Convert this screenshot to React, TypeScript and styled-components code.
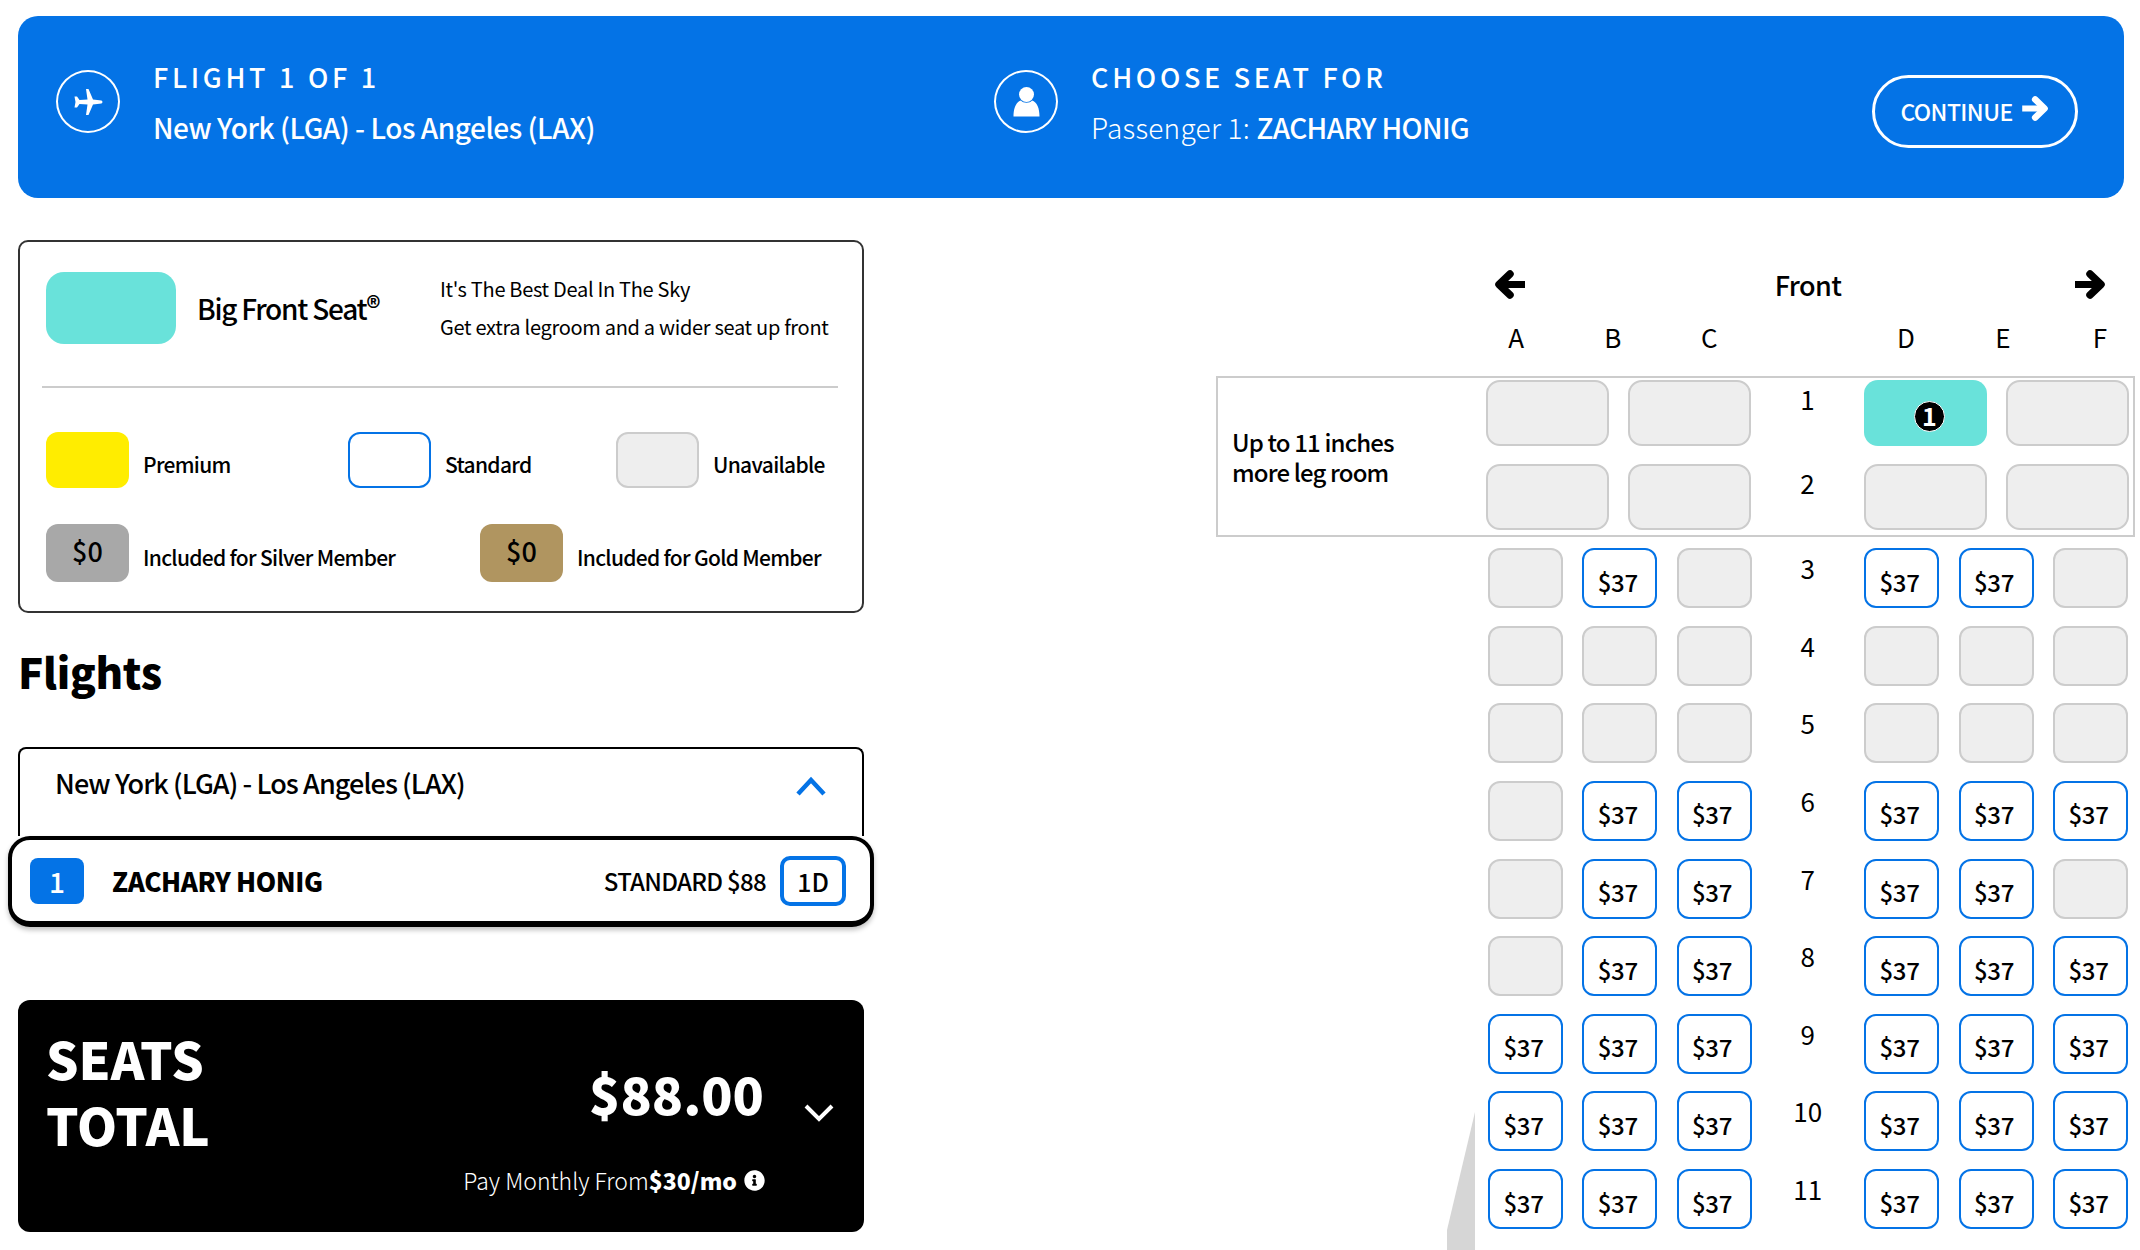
import React from "react";
import styled, { createGlobalStyle } from "styled-components";
import { FaInfoCircle } from "react-icons/fa";

const blue = "#0473e6";
const teal = "#69e2da";
const FONT = `"Noto Sans CJK SC", "Noto Sans", sans-serif`;

const Global = createGlobalStyle`
  html, body { margin: 0; padding: 0; background: #fff; }
  body { height: 1250px; overflow: hidden; font-family: ${FONT}; color: #000; }
  * { box-sizing: border-box; }
`;

const Page = styled.div`
  width: 2140px;
  height: 1250px;
  padding: 16px 5px 0 18px;
`;

const Banner = styled.header`
  width: 2106px;
  height: 182px;
  background: ${blue};
  border-radius: 20px;
  color: #fff;
  display: flex;
  align-items: center;
  padding: 0 46px 0 38px;
`;

const BannerBlock = styled.div<{ $width: number }>`
  width: ${(p) => p.$width}px;
  height: 90px;
  display: flex;
  align-items: flex-start;
  gap: 33px;
`;

const IconRing = styled.div`
  width: 64px;
  height: 63px;
  margin-top: 8px;
  border: 2px solid #fff;
  border-radius: 50%;
  display: flex;
  align-items: center;
  justify-content: center;
  flex: none;
  svg { display: block; }
`;

const BannerText = styled.div`
  display: flex;
  flex-direction: column;
  margin-top: -5px;
`;

const Eyebrow = styled.div`
  font-size: 27px;
  line-height: 40px;
  font-weight: 500;
  letter-spacing: 3.7px;
`;

const BannerLine = styled.div<{ $light?: boolean }>`
  font-size: 28px;
  line-height: 42px;
  margin-top: 9px;
  font-weight: ${(p) => (p.$light ? 300 : 500)};
  letter-spacing: ${(p) => (p.$light ? "0.25px" : "-0.45px")};
  b { font-weight: 500; letter-spacing: -0.65px; }
`;

const ContinueButton = styled.button`
  margin: 8px 0 0 auto;
  width: 206px;
  height: 73px;
  background: transparent;
  border: 3px solid #fff;
  border-radius: 37px;
  color: #fff;
  font-family: ${FONT};
  font-size: 23px;
  font-weight: 500;
  letter-spacing: -0.6px;
  display: flex;
  align-items: center;
  justify-content: center;
  gap: 9px;
  padding: 0;
  svg { margin-top: -6px; }
`;

const ArrowIcon = styled.svg<{ $flip?: boolean }>`
  display: block;
  flex: none;
  transform: ${(p) => (p.$flip ? "scaleX(-1)" : "none")};
`;

const Main = styled.main`
  display: flex;
  justify-content: space-between;
  align-items: flex-start;
`;

const LeftColumn = styled.section`
  width: 846px;
  padding-top: 42px;
`;

const Legend = styled.div`
  height: 373px;
  border: 2px solid #333;
  border-radius: 10px;
  padding: 30px 22px 0 26px;
`;

const FeatureRow = styled.div`
  display: flex;
  align-items: center;
  height: 72px;
`;

const FeatureSwatch = styled.div`
  width: 130px;
  height: 72px;
  background: ${teal};
  border-radius: 18px;
  flex: none;
`;

const FeatureTitle = styled.div`
  width: 264px;
  padding-left: 21px;
  font-size: 28px;
  line-height: 40px;
  font-weight: 500;
  letter-spacing: -1.25px;
  white-space: nowrap;
  sup { font-size: 28px; line-height: 0; vertical-align: 2px; letter-spacing: 0; font-weight: 700; }
`;

const FeatureCopy = styled.div`
  font-size: 20px;
  line-height: 38px;
  font-weight: 400;
  letter-spacing: -0.3px;
  white-space: nowrap;
`;

const Divider = styled.hr`
  height: 2px;
  border: 0;
  background: #ccc;
  margin: 42px 0 44px -4px;
  width: 796px;
`;

const LegendRow = styled.div<{ $columns: string; $gap: number }>`
  display: grid;
  grid-template-columns: ${(p) => p.$columns};
  margin-bottom: ${(p) => p.$gap}px;
`;

const LegendItem = styled.div`
  display: flex;
  align-items: center;
  gap: 14px;
`;

const Swatch = styled.div<{ $variant: string }>`
  width: 83px;
  height: ${(p) => (p.$variant === "silver" || p.$variant === "gold" ? 58 : 56)}px;
  border-radius: 12px;
  flex: none;
  display: flex;
  align-items: center;
  justify-content: center;
  font-size: 27px;
  font-weight: 500;
  padding-bottom: 5px;
  ${(p) =>
    ({
      premium: "background:#ffed00;",
      standard: `background:#fff;border:2px solid ${blue};`,
      unavailable: "background:#eee;border:2px solid #ccc;",
      silver: "background:#a8a8a8;",
      gold: "background:#b09560;",
    })[p.$variant]}
`;

const LegendLabel = styled.div`
  font-size: 21px;
  line-height: 30px;
  font-weight: 500;
  letter-spacing: -0.7px;
  padding-top: 8px;
  white-space: nowrap;
`;

const FlightsHeading = styled.h2`
  margin: 27px 0 0;
  font-size: 42px;
  line-height: 62px;
  font-weight: 900;
  letter-spacing: -0.3px;
`;

const FlightBox = styled.div`
  margin-top: 45px;
  height: 89px;
  border: 2px solid #000;
  border-bottom: 0;
  border-radius: 8px 8px 0 0;
  padding: 0 36px 0 35px;
  display: flex;
  justify-content: space-between;
  align-items: flex-start;
`;

const FlightName = styled.div`
  font-size: 27px;
  line-height: 40px;
  margin-top: 14px;
  font-weight: 500;
  letter-spacing: -0.92px;
`;

const Chevron = styled.svg<{ $top: number }>`
  display: block;
  flex: none;
  margin-top: ${(p) => p.$top}px;
`;

const PassengerCard = styled.div`
  width: 866px;
  height: 91px;
  margin-left: -10px;
  background: #fff;
  border: 4px solid #000;
  border-bottom-width: 6px;
  border-radius: 22px;
  box-shadow: 0 3px 5px rgba(0, 0, 0, 0.25);
  padding: 0 24px 0 18px;
  display: flex;
  align-items: center;
`;

const PassengerBadge = styled.div`
  width: 54px;
  height: 46px;
  background: ${blue};
  border-radius: 8px;
  color: #fff;
  font-size: 28px;
  font-weight: 500;
  display: flex;
  align-items: center;
  justify-content: center;
  flex: none;
`;

const PassengerName = styled.div`
  margin-left: 28px;
  font-size: 26px;
  font-weight: 900;
  letter-spacing: -0.4px;
`;

const PassengerFare = styled.div`
  margin-left: auto;
  font-size: 24px;
  font-weight: 500;
  letter-spacing: -0.7px;
`;

const SeatTag = styled.div`
  margin-left: 14px;
  width: 66px;
  height: 50px;
  border: 4px solid ${blue};
  border-radius: 10px;
  font-size: 25px;
  font-weight: 500;
  display: flex;
  align-items: center;
  justify-content: center;
`;

const TotalCard = styled.div`
  margin-top: 73px;
  height: 232px;
  background: #000;
  color: #fff;
  border-radius: 12px;
  padding: 25px 30px 0 28px;
  display: flex;
  justify-content: space-between;
`;

const TotalTitle = styled.div`
  font-size: 51px;
  line-height: 66px;
  font-weight: 900;
`;

const TotalRight = styled.div`
  display: flex;
  flex-direction: column;
  align-items: flex-end;
`;

const TotalAmountRow = styled.div`
  display: flex;
  align-items: flex-start;
  gap: 40px;
  margin-top: 32px;
`;

const TotalAmount = styled.div`
  font-size: 51.5px;
  line-height: 72px;
  font-weight: 900;
  letter-spacing: 0;
`;

const Monthly = styled.div`
  display: flex;
  align-items: center;
  margin: 34px 69px 0 0;
  font-size: 23px;
  line-height: 34px;
  font-weight: 300;
  white-space: nowrap;
  b { font-weight: 900; }
  svg { width: 21px; height: 21px; margin-left: 7px; }
`;

const SeatMap = styled.section`
  position: relative;
  width: 919px;
  padding-top: 71px;
`;

const MapNav = styled.div`
  display: flex;
  justify-content: space-between;
  align-items: center;
  height: 30px;
  padding: 0 28px 0 277px;
`;

const FrontLabel = styled.div`
  font-size: 27px;
  line-height: 40px;
  font-weight: 500;
  letter-spacing: -0.6px;
  margin: 2px 0 0 16px;
`;

const ColumnHeads = styled.div`
  display: grid;
  grid-template-columns: repeat(3, 96.5px) 100px repeat(3, 97px);
  margin: 18px 0 19px 252px;
  height: 40px;
`;

const ColumnHead = styled.div`
  font-size: 26px;
  line-height: 40px;
  font-weight: 400;
  text-align: center;
`;

const BigFrontBox = styled.div`
  position: relative;
  height: 161px;
  border: 2px solid #ccc;
  padding: 2px 0 0 268px;
  display: flex;
  flex-direction: column;
  gap: 18px;
`;

const LegRoomNote = styled.div`
  position: absolute;
  left: 14px;
  top: 49px;
  font-size: 24px;
  line-height: 30px;
  font-weight: 500;
  letter-spacing: -0.85px;
  white-space: nowrap;
`;

const SeatRow = styled.div`
  display: flex;
  align-items: flex-start;
`;

const SeatGroup = styled.div<{ $gap: number }>`
  display: flex;
  gap: ${(p) => p.$gap}px;
`;

const RowNumber = styled.div<{ $width: number; $top: number }>`
  width: ${(p) => p.$width}px;
  text-align: center;
  font-size: 26px;
  line-height: 34px;
  font-weight: 400;
  padding-top: ${(p) => p.$top}px;
  flex: none;
`;

const BigSeat = styled.div<{ $selected?: boolean }>`
  width: 123px;
  height: 66px;
  border-radius: 14px;
  display: flex;
  align-items: center;
  justify-content: center;
  ${(p) =>
    p.$selected
      ? `background:${teal};padding:6px 0 0 8px;`
      : "background:#eee;border:2px solid #ccc;"}
`;

const SelectedDot = styled.div`
  width: 31px;
  height: 31px;
  border-radius: 50%;
  border: 1.5px solid #fff;
  background: #000;
  color: #fff;
  font-size: 25px;
  line-height: 26px;
  font-weight: 700;
  text-align: center;
`;

const SeatRows = styled.div`
  display: flex;
  flex-direction: column;
  gap: 17.65px;
  margin: 11px 0 0 272px;
`;

const Seat = styled.div<{ $open: boolean }>`
  width: 75px;
  height: 60px;
  border-radius: 12px;
  flex: none;
  font-size: 24px;
  font-weight: 500;
  letter-spacing: -0.3px;
  display: flex;
  align-items: center;
  justify-content: center;
  padding: 6px 4px 0 0;
  ${(p) =>
    p.$open
      ? `background:#fff;border:2px solid ${blue};`
      : "background:#eee;border:2px solid #ccc;"}
`;

const WingShape = styled.svg`
  position: absolute;
  left: 231px;
  top: 914px;
  display: block;
`;

const rows: [number, string][] = [
  [3, "010110"],
  [4, "000000"],
  [5, "000000"],
  [6, "011111"],
  [7, "011110"],
  [8, "011111"],
  [9, "111111"],
  [10, "111111"],
  [11, "111111"],
];

const Price = ({ open }: { open: boolean }) => <Seat $open={open}>{open ? "$37" : null}</Seat>;

const Arrow = ({ width, height, flip }: { width: number; height: number; flip?: boolean }) => (
  <ArrowIcon $flip={flip} width={width} height={height} viewBox="0 0 32 29" fill="none" stroke="currentColor">
    <line x1="0" y1="14.5" x2="25" y2="14.5" strokeWidth="7" />
    <polyline points="15,4 26,14.5 15,25" strokeWidth="7.5" strokeLinecap="round" strokeLinejoin="round" />
  </ArrowIcon>
);

const PlaneIcon = () => (
  <svg width="29" height="26" viewBox="0 0 29 26" fill="#fff">
    <path d="M27.5 11.4 Q29.5 13 27.5 14.6 L19 15.6 L14.5 26 L12 26 L13.5 15.6 L5.5 15 L3 18.5 L0.5 18.5 L1.5 13 L0.5 7.5 L3 7.5 L5.5 11 L13.5 10.4 L12 0 L14.5 0 L19 10.4 Z" />
  </svg>
);

const UserIcon = () => (
  <svg width="27" height="30" viewBox="0 0 27 30" fill="#fff">
    <circle cx="13.5" cy="7.5" r="7.5" />
    <path d="M0.5 29.5 C0.5 21 3 15 8 13.5 C10 16.5 17 16.5 19 13.5 C24 15 26.5 21 26.5 29.5 Z" />
  </svg>
);

export default function App() {
  return (
    <Page>
      <Global />
      <Banner>
        <BannerBlock $width={938}>
          <IconRing><PlaneIcon /></IconRing>
          <BannerText>
            <Eyebrow>FLIGHT 1 OF 1</Eyebrow>
            <BannerLine>New York (LGA) - Los Angeles (LAX)</BannerLine>
          </BannerText>
        </BannerBlock>
        <BannerBlock $width={700}>
          <IconRing><UserIcon /></IconRing>
          <BannerText>
            <Eyebrow>CHOOSE SEAT FOR</Eyebrow>
            <BannerLine $light>Passenger 1: <b>ZACHARY HONIG</b></BannerLine>
          </BannerText>
        </BannerBlock>
        <ContinueButton>CONTINUE <Arrow width={28} height={25} /></ContinueButton>
      </Banner>
      <Main>
        <LeftColumn>
          <Legend>
            <FeatureRow>
              <FeatureSwatch />
              <FeatureTitle>Big Front Seat<sup>®</sup></FeatureTitle>
              <FeatureCopy>It's The Best Deal In The Sky<br />Get extra legroom and a wider seat up front</FeatureCopy>
            </FeatureRow>
            <Divider />
            <LegendRow $columns="302px 268px 1fr" $gap={36}>
              <LegendItem><Swatch $variant="premium" /><LegendLabel>Premium</LegendLabel></LegendItem>
              <LegendItem><Swatch $variant="standard" /><LegendLabel>Standard</LegendLabel></LegendItem>
              <LegendItem><Swatch $variant="unavailable" /><LegendLabel>Unavailable</LegendLabel></LegendItem>
            </LegendRow>
            <LegendRow $columns="434px 1fr" $gap={0}>
              <LegendItem><Swatch $variant="silver">$0</Swatch><LegendLabel>Included for Silver Member</LegendLabel></LegendItem>
              <LegendItem><Swatch $variant="gold">$0</Swatch><LegendLabel>Included for Gold Member</LegendLabel></LegendItem>
            </LegendRow>
          </Legend>
          <FlightsHeading>Flights</FlightsHeading>
          <FlightBox>
            <FlightName>New York (LGA) - Los Angeles (LAX)</FlightName>
            <Chevron $top={27} width="30" height="20" viewBox="0 0 30 20">
              <polyline points="2,18 15,4 28,18" fill="none" stroke={blue} strokeWidth="4.5" />
            </Chevron>
          </FlightBox>
          <PassengerCard>
            <PassengerBadge>1</PassengerBadge>
            <PassengerName>ZACHARY HONIG</PassengerName>
            <PassengerFare>STANDARD $88</PassengerFare>
            <SeatTag>1D</SeatTag>
          </PassengerCard>
          <TotalCard>
            <TotalTitle>SEATS<br />TOTAL</TotalTitle>
            <TotalRight>
              <TotalAmountRow>
                <TotalAmount>$88.00</TotalAmount>
                <Chevron $top={47} width="30" height="18" viewBox="0 0 30 18">
                  <polyline points="2,2 15,15 28,2" fill="none" stroke="#fff" strokeWidth="4" />
                </Chevron>
              </TotalAmountRow>
              <Monthly>Pay Monthly From<b>$30/mo</b><FaInfoCircle /></Monthly>
            </TotalRight>
          </TotalCard>
        </LeftColumn>
        <SeatMap>
          <WingShape width="29" height="138" viewBox="0 0 29 138">
            <polygon points="28,0 0,118 0,138 28,138" fill="#d6d6d6" />
          </WingShape>
          <MapNav>
            <Arrow width={32} height={29} flip />
            <FrontLabel>Front</FrontLabel>
            <Arrow width={32} height={29} />
          </MapNav>
          <ColumnHeads>
            {["A", "B", "C", "", "D", "E", "F"].map((c, i) => (
              <ColumnHead key={i}>{c}</ColumnHead>
            ))}
          </ColumnHeads>
          <BigFrontBox>
            <LegRoomNote>Up to 11 inches<br />more leg room</LegRoomNote>
            <SeatRow>
              <SeatGroup $gap={19}><BigSeat /><BigSeat /></SeatGroup>
              <RowNumber $width={113} $top={2}>1</RowNumber>
              <SeatGroup $gap={19}>
                <BigSeat $selected><SelectedDot>1</SelectedDot></BigSeat>
                <BigSeat />
              </SeatGroup>
            </SeatRow>
            <SeatRow>
              <SeatGroup $gap={19}><BigSeat /><BigSeat /></SeatGroup>
              <RowNumber $width={113} $top={2}>2</RowNumber>
              <SeatGroup $gap={19}><BigSeat /><BigSeat /></SeatGroup>
            </SeatRow>
          </BigFrontBox>
          <SeatRows>
            {rows.map(([n, pattern]) => (
              <SeatRow key={n}>
                <SeatGroup $gap={19.25}>
                  {[0, 1, 2].map((i) => <Price key={i} open={pattern[i] === "1"} />)}
                </SeatGroup>
                <RowNumber $width={112.5} $top={3}>{n}</RowNumber>
                <SeatGroup $gap={19.5}>
                  {[3, 4, 5].map((i) => <Price key={i} open={pattern[i] === "1"} />)}
                </SeatGroup>
              </SeatRow>
            ))}
          </SeatRows>
        </SeatMap>
      </Main>
    </Page>
  );
}
